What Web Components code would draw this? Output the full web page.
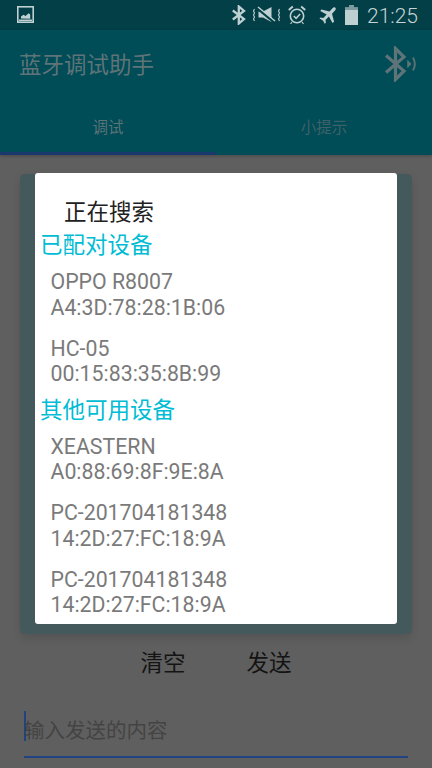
<!DOCTYPE html>
<html lang="zh"><head><meta charset="utf-8">
<style>
html,body{margin:0;padding:0;width:432px;height:768px;overflow:hidden;background:#5f5f5f;font-family:Roboto,"Noto Sans CJK SC",sans-serif}
</style></head><body>
<app-screen>
  <status-bar slot="status"></status-bar>
  <app-bar slot="bar" title="蓝牙调试助手"></app-bar>
  <tab-strip slot="bar"><tab-item active>调试</tab-item><tab-item dim>小提示</tab-item></tab-strip>
  <log-card slot="main"></log-card>
  <action-row slot="main"><text-btn>清空</text-btn><text-btn>发送</text-btn></action-row>
  <send-input slot="main" placeholder="输入发送的内容"></send-input>
  <device-dialog slot="overlay" heading="正在搜索">
    <section-label>已配对设备</section-label>
    <device-row name="OPPO R8007" mac="A4:3D:78:28:1B:06"></device-row>
    <device-row name="HC-05" mac="00:15:83:35:8B:99"></device-row>
    <section-label tight>其他可用设备</section-label>
    <device-row name="XEASTERN" mac="A0:88:69:8F:9E:8A"></device-row>
    <device-row name="PC-201704181348" mac="14:2D:27:FC:18:9A"></device-row>
    <device-row name="PC-201704181348" mac="14:2D:27:FC:18:9A"></device-row>
  </device-dialog>
</app-screen>
<script>
const F='Roboto,"Noto Sans CJK SC",sans-serif';
function def(name,html){
  customElements.define(name,class extends HTMLElement{
    connectedCallback(){
      if(this.shadowRoot)return;
      const s=this.attachShadow({mode:'open'});
      s.innerHTML=typeof html==='function'?html(this):html;
    }
  });
}
def('app-screen',`<style>
:host{display:flex;flex-direction:column;position:relative;width:432px;height:768px;overflow:hidden;font-family:${F};background:#5f5f5f}
header{background:#004c57;display:flex;flex-direction:column;box-shadow:0 1px 3px rgba(0,0,0,.25)}
main{display:flex;flex-direction:column;flex:1;min-height:0}
</style>
<slot name="status"></slot>
<header><slot name="bar"></slot></header>
<main><slot name="main"></slot></main>
<slot name="overlay"></slot>`);
def('status-bar',`<style>
:host{display:flex;align-items:center;height:30px;background:#023f46;color:#bfd0d2;padding:0 14px 0 17px;box-sizing:border-box;flex:none}
.sp{flex:1}svg{display:block;flex:none}
.t{font:21px/30px Roboto,sans-serif;font-weight:300;margin-left:9px;color:#c4d4d6;position:relative;top:1px}
</style>
<svg width="17" height="17" viewBox="0 0 17 17" style="margin-top:-1px"><rect x=".8" y=".8" width="15.400" height="15.400" fill="none" stroke="#bfd0d2" stroke-width="1.600"/><rect x="2" y="13.500" width="13" height="1.600" fill="#bfd0d2"/><path d="M4 12.500V10.500l2.500-1.800 2 1.300 3.200-2.800 1.500 1.300v4.300z" fill="#bfd0d2"/></svg>
<span class="sp"></span>
<svg width="14" height="20" viewBox="0 0 14 20" style="margin-right:7px"><path d="M.8 5.500 12 14 6.800 18.500V1.500L12 6 .8 14.500" fill="none" stroke="#bfd0d2" stroke-width="2.300"/></svg>
<svg width="28" height="18" viewBox="0 0 28 18" style="margin-right:7px"><path d="M1.500 3 .5 5l1 2-1 2 1 2-1 2 1 2M26.500 3l-1 2 1 2-1 2 1 2-1 2 1 2" fill="none" stroke="#bfd0d2" stroke-width="1.100"/><path d="M5.500 5.500h4.500l8.500-4.500v15l-8.500-4.500H5.500z" fill="#bfd0d2"/><path d="M4.500 2.500l17 14" stroke="#023f46" stroke-width="2.500"/><path d="M5 1l17 14" stroke="#bfd0d2" stroke-width="1.500"/></svg>
<svg width="18" height="20" viewBox="0 0 18 20" style="margin-right:13px"><circle cx="9" cy="11" r="6.700" fill="none" stroke="#bfd0d2" stroke-width="1.600"/><path d="M5.800 11l2.300 2.300 4-4.300" fill="none" stroke="#bfd0d2" stroke-width="1.500"/><path d="M.8 5l4-3.500M17.200 5l-4-3.500" stroke="#bfd0d2" stroke-width="2"/><path d="M4 17l-1.500 2M14 17l1.500 2" stroke="#bfd0d2" stroke-width="1.200"/></svg>
<svg width="17" height="17" viewBox="0 0 17 17" style="margin-right:9px"><path d="M16.300.700c.8.800.5 2-.3 2.900L13 6.800l2.100 8-1.600 1.300-3.600-6.500L6.500 13l.4 2.800-1.100 1-1.900-3.300L.5 11.600 1.500 10.500l2.800.4L7.700 7.500 1.200 3.900 2.500 2.400l8 2.100 3-3.200c.8-.8 2-1.400 2.800-.6z" fill="#bfd0d2"/></svg>
<svg width="13" height="20" viewBox="0 0 13 20"><path d="M4 0h5v2.500h4V20H0V2.500h4z" fill="#bfd0d2"/><path d="M4 0h5v2.500h4V5H0V2.500h4z" fill="#7f9a9e"/></svg>
<span class="t">21:25</span>`);
def('app-bar',e=>`<style>
:host{display:flex;align-items:center;height:70px;padding:0 14px 0 19px;box-sizing:border-box}
.t{flex:1;font:22.500px/1 "Noto Sans CJK SC",sans-serif;color:#5f7478;margin-top:-3px}
svg{display:block}
</style><span class="t">${e.getAttribute('title')}</span>
<svg width="34" height="36" viewBox="0 0 34 36" style="margin-top:-2px"><path d="M2 9.500 20 25 11.500 33.500V2.500L20 11 2 26.500" fill="none" stroke="#5f7478" stroke-width="3.200"/><path d="M24 15.500l2.500 2.500-2.500 2.500z" fill="#5f7478" stroke="#5f7478" stroke-width="1.500"/><path d="M29 11.500c2.300 4 2.300 9 0 13" fill="none" stroke="#5f7478" stroke-width="1.800"/></svg>`);
def('tab-strip',`<style>:host{display:grid;grid-template-columns:1fr 1fr;height:55px}</style><slot></slot>`);
def('tab-item',e=>`<style>
:host{display:flex;align-items:center;justify-content:center;box-sizing:border-box;font:15.500px/1 "Noto Sans CJK SC",sans-serif;padding-top:${e.hasAttribute('active')?'2px':'0'};padding-bottom:${e.hasAttribute('active')?'0':'1px'};color:${e.hasAttribute('dim')?'#3f6168':'#5c7377'};border-bottom:${e.hasAttribute('active')?'3px solid #19386b':'0'}}
</style><slot></slot>`);
def('log-card',`<style>:host{display:block;height:460px;margin:19px 20px 0;background:#44595c;border-radius:5px;box-shadow:0 4px 8px rgba(0,0,0,.12);flex:none}</style>`);
def('action-row',`<style>:host{display:flex;justify-content:center;gap:61px;height:60px;align-items:center;flex:none}</style><slot></slot>`);
def('text-btn',`<style>:host{display:block;font:22.500px/1 "Noto Sans CJK SC",sans-serif;color:#141414;margin-top:-5px}</style><slot></slot>`);
def('send-input',e=>`<style>
:host{display:block;margin:8px 24px 0;height:56px;box-sizing:border-box;border-bottom:2.500px solid #21437f;position:relative;flex:none}
.w{display:flex;align-items:center;height:30px;margin-top:9px}
.c{width:2px;height:30px;background:#21437f;flex:none;margin-right:-2px}
.p{font:20.500px/30px "Noto Sans CJK SC",sans-serif;color:#444;white-space:nowrap;position:relative;top:3px}
</style><div class="w"><span class="c"></span><span class="p">${e.getAttribute('placeholder')}</span></div>`);
def('device-dialog',e=>`<style>
:host{position:absolute;left:35px;top:173px;width:362px;height:451px;background:#fff;border-radius:3px;box-sizing:border-box;overflow:hidden;display:flex;flex-direction:column;padding:21px 0 0 6px}
h2{margin:0 0 0 23px;font:400 22.500px/32px "Noto Sans CJK SC",sans-serif;color:#212121}
</style><h2>${e.getAttribute('heading')}</h2><slot></slot>`);
def('section-label',`<style>:host{display:block;font:22.500px/34px "Noto Sans CJK SC",sans-serif;color:#00bcd4;height:33px;margin-left:-1px;flex:none}:host([tight]){margin-top:-1.300px}</style><slot></slot>`);
def('device-row',e=>`<style>
:host{display:block;padding:10px 10px 0 9.500px;height:56.500px;flex:none;font:21.300px/25.500px Roboto,sans-serif;color:#7a7a7a;white-space:nowrap;box-sizing:content-box}
div{height:25.500px}
</style><div>${e.getAttribute('name')}</div><div>${e.getAttribute('mac')}</div>`);
</script>
</body></html>
